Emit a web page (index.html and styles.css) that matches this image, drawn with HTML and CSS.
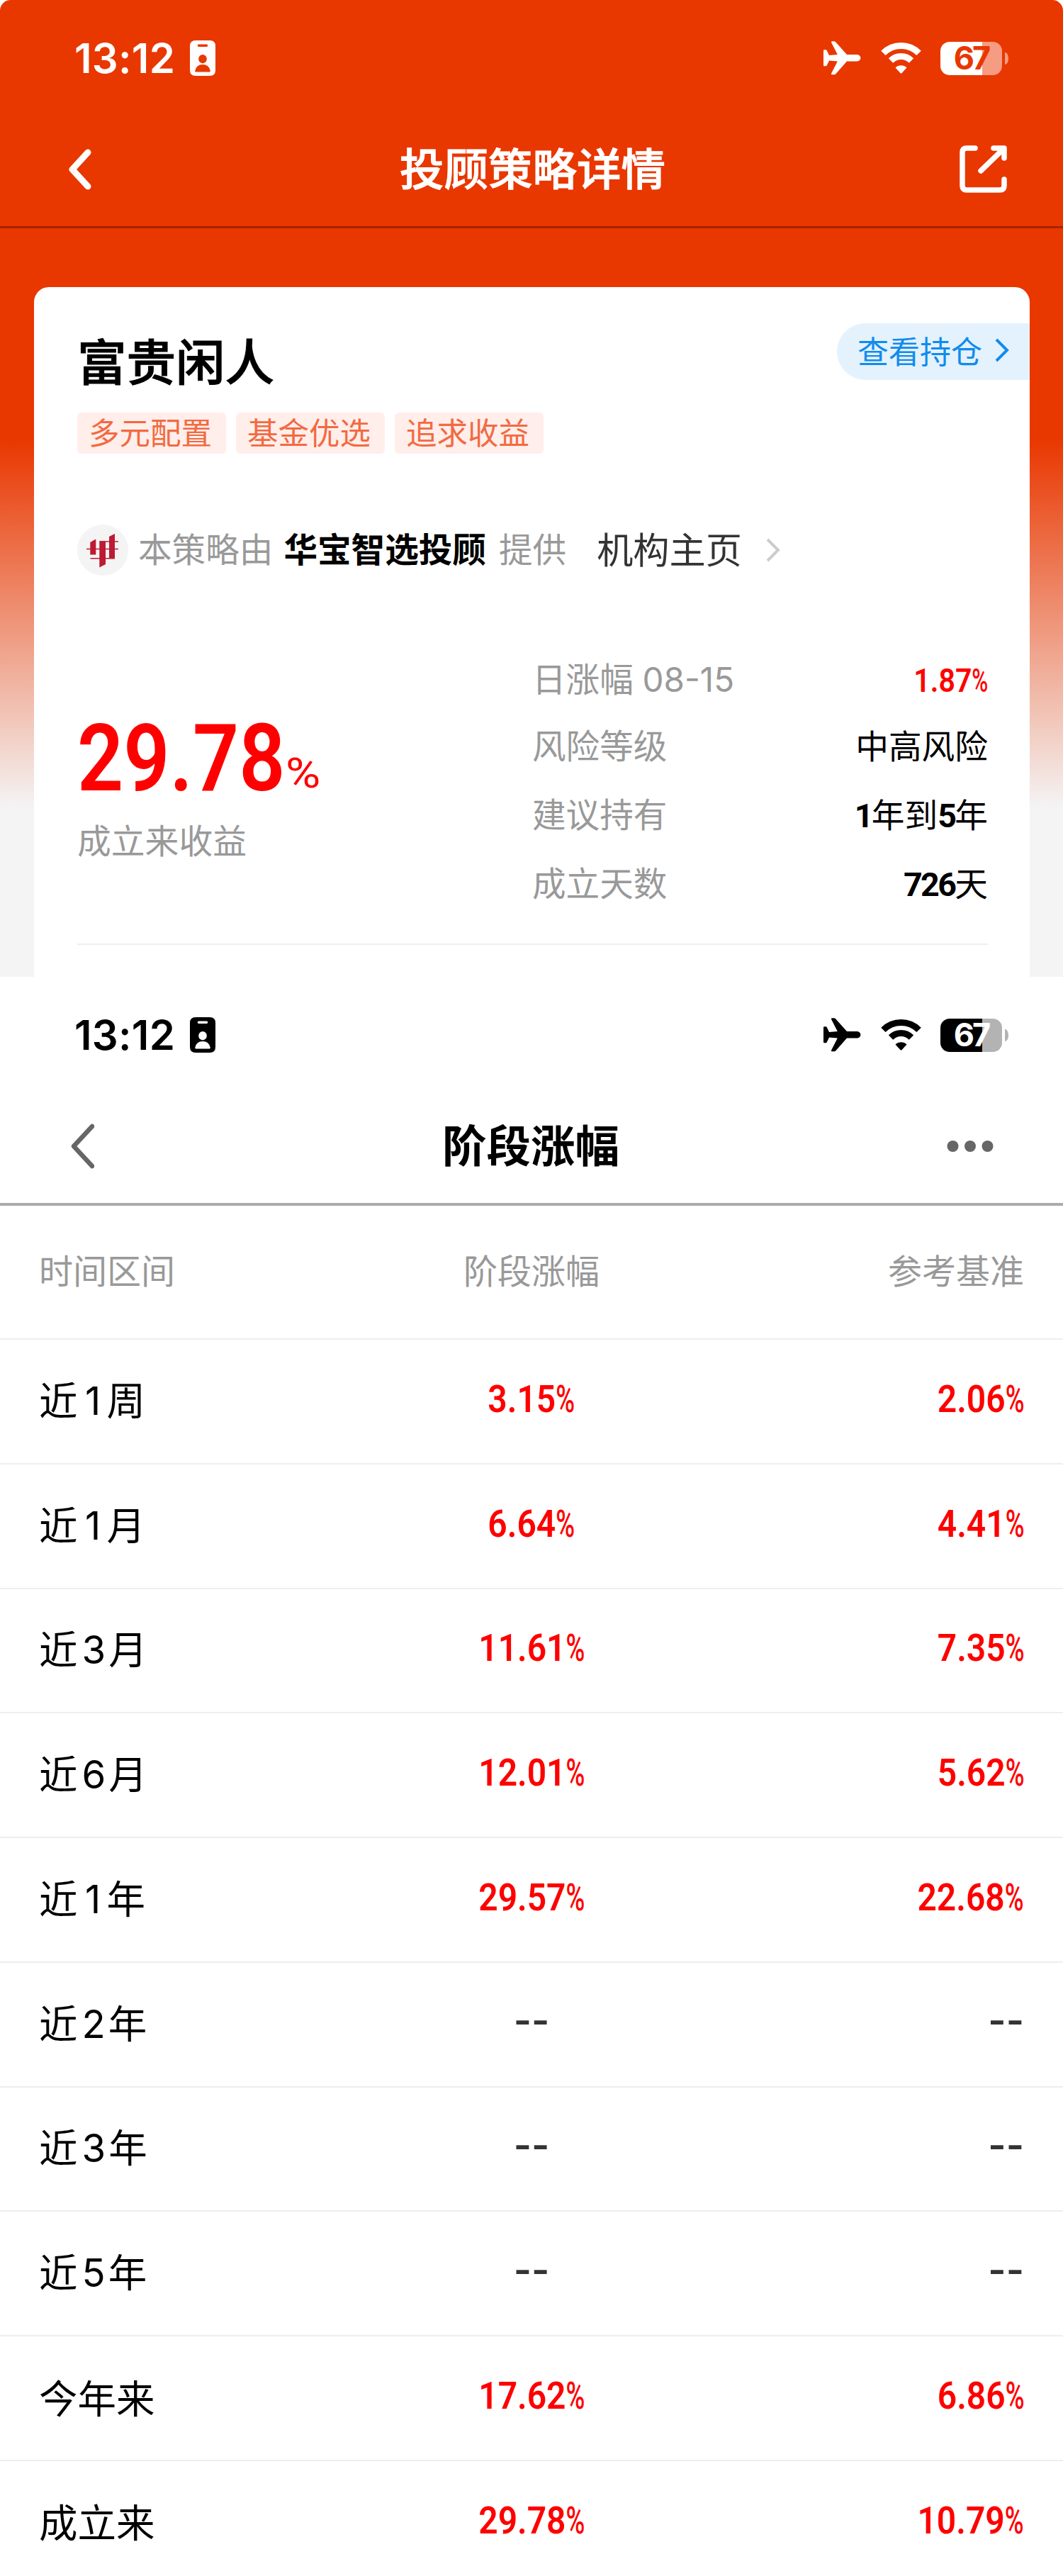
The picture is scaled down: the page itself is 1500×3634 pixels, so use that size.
FILE: index.html
```html
<!DOCTYPE html>
<html lang="zh-CN">
<head>
  <meta charset="UTF-8" />
  <title>投顾策略详情</title>
  <link rel="stylesheet" href="styles.css">
</head>
<body>

  <!-- Shared status bar icons -->
  <svg width="0" height="0" class="sprite">
    <symbol id="icon-plane" viewBox="0 0 53 48">
      <path d="M0 13.5Q0 12.3 1.2 12.3H3.4Q4.4 12.3 4.8 13.3L8 20L19.8 19L11 1.8Q10.6 .3 12 .3H15Q16.8 .3 17.8 2L33 19H46.5C50 19 52.4 21 52.4 23.8S50 28.6 46.5 28.6H33L17.8 45.7Q16.8 47.3 15 47.3H12Q10.6 47.3 11 45.8L19.8 28.6L8 27.6L4.8 34.3Q4.4 35.3 3.4 35.3H1.2Q0 35.3 0 34.1Z" fill="currentColor" />
    </symbol>
    <symbol id="icon-wifi" viewBox="0 0 57 44">
      <path d="M3.4 14.9A35.5 35.5 0 0 1 53.6 14.9M14 25.5A20.5 20.5 0 0 1 43 25.5" fill="none" stroke="currentColor" stroke-width="9" />
      <path d="M20.5 35.5A11.5 11.5 0 0 1 36.5 35.5L29.6 43Q28.5 44 27.4 43Z" fill="currentColor" />
    </symbol>
    <symbol id="icon-card" viewBox="0 0 36 50">
      <path fill-rule="evenodd" d="M8 0H28Q36 0 36 8V42Q36 50 28 50H8Q0 50 0 42V8Q0 0 8 0ZM12.5 5.4A1.8 1.8 0 0 0 12.5 9H23.5A1.8 1.8 0 0 0 23.5 5.4ZM18 20A5.8 6.2 0 0 0 18 32.4A5.8 6.2 0 0 0 18 20ZM7.2 43Q9 34 18 34T28.8 43Q28.8 44.5 27.5 44.5H8.5Q7.2 44.5 7.2 43Z" fill="currentColor" />
    </symbol>
  </svg>

  <section class="screen strategy">
    <div class="status-bar">
      <span class="time">13:12</span>
      <svg class="card-icon"><use href="#icon-card" /></svg>
      <svg class="plane-icon"><use href="#icon-plane" /></svg>
      <svg class="wifi-icon"><use href="#icon-wifi" /></svg>
      <span class="battery">67</span>
      <span class="battery-tip"></span>
    </div>
    <header class="nav">
      <svg class="back" viewBox="0 0 40 70"><path d="M31 11L9 35L31 59" /></svg>
      <h1>投顾策略详情</h1>
      <svg class="share" viewBox="0 0 67 67"><path d="M22 4H10Q4 4 4 10V57Q4 63 10 63H57Q63 63 63 57V48M48 4H63V18M61 6L30 36" /></svg>
    </header>

    <div class="card">
      <a class="pill">查看持仓<svg viewBox="0 0 20 34"><path d="M2 2L17 17L2 32" /></svg></a>
      <h2>富贵闲人</h2>
      <div class="tags">
        <span>多元配置</span>
        <span>基金优选</span>
        <span>追求收益</span>
      </div>

      <div class="org">
        <svg class="org-logo" viewBox="0 0 72 72">
          <circle cx="36" cy="36" r="36" />
          <path d="M18.300 25L26.300 20.500V42.500H18.300ZM31.300 23.500H40V56L31.300 60.500ZM45 17L53 13V48H45Z" />
          <path d="M13 33.700H58V35.300H13ZM18.500 47H53V48.600H18.500ZM31.300 23.200H58V24.800H31.300Z" />
        </svg>
        <span class="by">本策略由</span>
        <strong>华宝智选投顾</strong>
        <span class="give">提供</span>
        <span class="home">机构主页</span>
        <svg class="org-more" viewBox="0 0 20 34"><path d="M2 2L17 17L2 32" /></svg>
      </div>

      <div class="summary">
        <div class="profit">
          <div class="profit-num"><b>29.78</b><i>%</i></div>
          <div class="label">成立来收益</div>
        </div>
        <dl class="stats">
          <div><dt>日涨幅 <span class="date">08-15</span></dt><dd class="red"><span class="num">1.87<i>%</i></span></dd></div>
          <div><dt>风险等级</dt><dd>中高风险</dd></div>
          <div><dt>建议持有</dt><dd><b>1</b>年到<b>5</b>年</dd></div>
          <div><dt>成立天数</dt><dd><b>726</b>天</dd></div>
        </dl>
      </div>
    </div>
  </section>

  <section class="screen period">
    <div class="status-bar">
      <span class="time">13:12</span>
      <svg class="card-icon"><use href="#icon-card" /></svg>
      <svg class="plane-icon"><use href="#icon-plane" /></svg>
      <svg class="wifi-icon"><use href="#icon-wifi" /></svg>
      <span class="battery">67</span>
      <span class="battery-tip"></span>
    </div>
    <header class="nav">
      <svg class="back" viewBox="0 0 40 70"><path d="M37 7L11 35L37 63" /></svg>
      <h1>阶段涨幅</h1>
      <svg class="more" viewBox="0 0 66 16"><circle cx="8.5" cy="8" r="8" /><circle cx="33" cy="8" r="8" /><circle cx="57.5" cy="8" r="8" /></svg>
    </header>

    <div class="row head"><span>时间区间</span><span>阶段涨幅</span><span>参考基准</span></div>
    <div class="row"><span>近<em>1</em>周</span><span class="num">3.15<i>%</i></span><span class="num">2.06<i>%</i></span></div>
    <div class="row"><span>近<em>1</em>月</span><span class="num">6.64<i>%</i></span><span class="num">4.41<i>%</i></span></div>
    <div class="row"><span>近<em>3</em>月</span><span class="num">11.61<i>%</i></span><span class="num">7.35<i>%</i></span></div>
    <div class="row"><span>近<em>6</em>月</span><span class="num">12.01<i>%</i></span><span class="num">5.62<i>%</i></span></div>
    <div class="row"><span>近<em>1</em>年</span><span class="num">29.57<i>%</i></span><span class="num">22.68<i>%</i></span></div>
    <div class="row"><span>近<em>2</em>年</span><span class="none">--</span><span class="none">--</span></div>
    <div class="row"><span>近<em>3</em>年</span><span class="none">--</span><span class="none">--</span></div>
    <div class="row"><span>近<em>5</em>年</span><span class="none">--</span><span class="none">--</span></div>
    <div class="row"><span>今年来</span><span class="num">17.62<i>%</i></span><span class="num">6.86<i>%</i></span></div>
    <div class="row"><span>成立来</span><span class="num">29.78<i>%</i></span><span class="num">10.79<i>%</i></span></div>
  </section>

</body>
</html>
```

FILE: styles.css
```css
* {
  box-sizing: border-box;
}

body {
  margin: 0;
  width: 1500px;
  height: 3634px;
  overflow: hidden;
  background: #fff;
  font-family: "Noto Sans CJK SC", sans-serif;
  color: #000;
}

h1, h2, dl, dd {
  margin: 0;
}

i, em {
  font-style: normal;
}

.sprite {
  display: block;
}

/* Status bar */
.status-bar {
  display: flex;
  align-items: center;
  height: 164px;
  padding: 0 77px 0 105px;
}

.time {
  width: 163px;
  font-family: Inter, sans-serif;
  font-size: 58px;
  font-weight: 600;
  letter-spacing: 0.3px;
}

.card-icon {
  width: 36px;
  height: 50px;
}

.plane-icon {
  width: 53px;
  height: 48px;
  margin-left: auto;
}

.wifi-icon {
  width: 57px;
  height: 44px;
  margin-left: 28px;
}

.battery {
  width: 87px;
  height: 47px;
  margin-left: 27px;
  border-radius: 13px;
  background: linear-gradient(90deg, #fff 59px, #f69c82 59px);
  color: #e93700;
  font-family: Inter, sans-serif;
  font-size: 45px;
  font-weight: 700;
  line-height: 46px;
  letter-spacing: -3px;
  text-align: center;
}

.battery-tip {
  width: 5px;
  height: 17px;
  margin-left: 4px;
  border-radius: 0 5px 5px 0 / 0 9px 9px 0;
  background: #f69c82;
}

/* Title bar */
.nav {
  display: flex;
  align-items: center;
  justify-content: space-between;
  height: 158px;
  padding: 0 79px 6px 93px;
  border-bottom: 3px solid #a92300;
}

.nav h1 {
  padding-bottom: 8px;
  font-size: 62.5px;
  font-weight: 500;
  line-height: 90px;
  -webkit-text-stroke: 1px currentColor;
}

.nav svg {
  fill: none;
  stroke: currentColor;
  stroke-linecap: round;
  stroke-linejoin: round;
}

.back {
  width: 40px;
  height: 70px;
  margin-right: 16px;
  stroke-width: 9;
}

.nav .share {
  width: 67px;
  height: 67px;
  stroke-width: 7.5;
}

/* Strategy page */
.strategy {
  height: 1378px;
  border-radius: 15px 15px 0 0;
  background: linear-gradient(#e93700 620px, #f4f4f4 1140px);
}

.strategy .status-bar,
.strategy .nav {
  color: #fff;
}

.card {
  position: relative;
  height: 973px;
  margin: 83px 47px 0 48px;
  padding: 57px 59px 0 61px;
  border-radius: 21px 21px 0 0;
  background: #fff;
}

.card h2 {
  font-size: 69.5px;
  font-weight: 500;
  line-height: 90px;
  -webkit-text-stroke: 1px currentColor;
}

.pill {
  position: absolute;
  top: 51px;
  right: 0;
  display: flex;
  align-items: center;
  width: 272px;
  height: 80px;
  padding: 0 29px 4px 29px;
  border-radius: 40px 0 0 40px;
  background: #e4f2fd;
  color: #108cee;
  font-size: 44px;
  line-height: 60px;
  white-space: nowrap;
}

.pill svg,
.org-more {
  flex: none;
  width: 20px;
  height: 34px;
  margin-left: auto;
  fill: none;
  stroke: currentColor;
  stroke-width: 4;
}

.tags {
  display: flex;
  gap: 14px;
  margin-top: 30px;
}

.tags span {
  width: 210px;
  height: 58px;
  padding-right: 4px;
  border-radius: 6px;
  background: #ffeeea;
  color: #f26a42;
  font-size: 43.5px;
  line-height: 53px;
  text-align: center;
}

.org {
  display: flex;
  align-items: center;
  height: 72px;
  margin-top: 100px;
  font-size: 47.6px;
  line-height: 68px;
  color: #999;
}

.org span,
.org strong {
  padding-bottom: 7px;
}

.org-logo {
  width: 72px;
  height: 72px;
  fill: #be1a33;
}

.org-logo circle {
  fill: #f4f4f4;
}

.by {
  margin-left: 14px;
}

.org strong {
  margin-left: 15px;
  color: #000;
  font-weight: 700;
}

.give {
  margin-left: 18px;
}

.home {
  margin-left: 43px;
  color: #333;
  font-size: 51.2px;
}

.org .org-more {
  margin-left: 34px;
  color: #ccc;
}

.summary {
  display: flex;
  justify-content: space-between;
  height: 521px;
  border-bottom: 2px solid #eee;
}

.profit {
  padding-top: 189px;
  white-space: nowrap;
}

.profit-num {
  height: 138px;
  font-family: Roboto, sans-serif;
  line-height: 138px;
  color: #fe0000;
}

.profit-num b {
  display: inline-block;
  width: 294px;
  font-size: 132px;
  font-weight: 600;
  transform: scaleX(.865);
  transform-origin: left;
}

.profit-num i {
  display: inline-block;
  font-size: 60px;
  line-height: 60px;
  vertical-align: 4px;
  transform: scaleX(1.12);
  transform-origin: left;
}

.label {
  margin-top: 10px;
  color: #999;
  font-size: 47.8px;
  line-height: 70px;
}

.stats {
  width: 643px;
  padding-top: 95px;
  font-size: 47.6px;
  line-height: 97px;
}

.stats div {
  display: flex;
  justify-content: space-between;
  height: 97px;
}

.stats div:first-child {
  height: 94px;
}

.stats dt {
  color: #999;
}

.date {
  margin-left: 2px;
  font-family: Inter, sans-serif;
}

.stats dd {
  font-size: 46.7px;
}

.stats b {
  font-family: Roboto, sans-serif;
  font-weight: 700;
  letter-spacing: -2.7px;
}

/* Digits are narrow, the percent sign narrower still */
.num {
  display: inline-block;
  color: #fe0000;
  font-family: Roboto, sans-serif;
  font-weight: 600;
  transform: scaleX(.88);
  transform-origin: right;
}

.num i {
  display: inline-block;
  width: .56em;
  font-weight: 500;
  transform: scaleX(.76);
  transform-origin: left;
}

/* Period page */
.period .battery {
  background: linear-gradient(90deg, #000 59px, #b3b3b3 59px);
  color: #fff;
}

.period .battery-tip {
  background: #b3b3b3;
}

.period .nav {
  height: 159px;
  padding-right: 98px;
  border-bottom: 4px solid #aaa;
}

.period .nav h1 {
  font-weight: 700;
  -webkit-text-stroke: 0;
}

.period .back {
  margin-right: 29px;
  stroke: #666;
  stroke-width: 6.5;
}

.nav .more {
  width: 66px;
  height: 16px;
  fill: #666;
  stroke: none;
}

.row {
  display: grid;
  grid-template-columns: 1fr 1fr 1fr;
  align-items: center;
  height: 175.77px;
  padding: 0 55px;
  border-bottom: 2px solid #eee;
  font-size: 54.5px;
  line-height: 80px;
}

.row span:nth-child(1) {
  padding-bottom: 5px;
}

.row span:nth-child(2) {
  justify-self: center;
  transform-origin: center;
}

.row span:nth-child(3) {
  justify-self: end;
}

.row.head {
  height: 189px;
  padding-bottom: 10px;
  color: #999;
  font-size: 48px;
}

.row.head span {
  padding-bottom: 0;
}

.row em {
  display: inline-block;
  min-width: 31px;
  margin: 0 4px 0 6px;
  font-family: Inter, sans-serif;
  text-align: center;
}

.row .num,
.row .none {
  margin-bottom: 8px;
}

.row .none {
  margin-bottom: 11px;
}

.none {
  color: #333;
  font-family: Inter, sans-serif;
  font-weight: 600;
}
```
